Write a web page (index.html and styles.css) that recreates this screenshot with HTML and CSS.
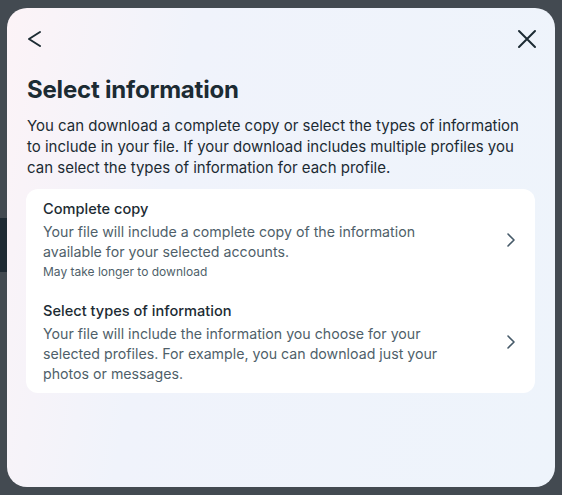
FILE: index.html
```html
<!DOCTYPE html>
<html lang="en">
<head>
    <meta charset="UTF-8">
    <meta name="viewport" content="width=device-width, initial-scale=1.0">
    <title>Select information</title>
    <link rel="stylesheet" href="styles.css">
</head>
<body>
    <div class="modal">
        <div class="top-bar">
            <button class="icon-btn" aria-label="Back">
                <svg width="24" height="24" viewBox="0 0 24 24"><path d="M18 5l-11 7 11 7" fill="none" stroke="#1c2b33" stroke-width="2" stroke-linecap="round" stroke-linejoin="round"/></svg>
            </button>
            <button class="icon-btn" aria-label="Close">
                <svg width="24" height="24" viewBox="0 0 24 24"><path d="M4 4l16 16M20 4L4 20" fill="none" stroke="#1c2b33" stroke-width="2" stroke-linecap="round"/></svg>
            </button>
        </div>
        <h1 class="title">Select information</h1>
        <p class="intro">You can download a complete copy or select the types of information to include in your file. If your download includes multiple profiles you can select the types of information for each profile.</p>
        <div class="card">
            <div class="option">
                <div class="option-text">
                    <div class="option-title">Complete copy</div>
                    <div class="option-desc">Your file will include a complete copy of the information available for your selected accounts.</div>
                    <div class="option-note">May take longer to download</div>
                </div>
                <svg class="chevron" width="16" height="16" viewBox="0 0 16 16"><path d="M8 2l6 6-6 6" fill="none" stroke="#465a69" stroke-width="1.6" stroke-linecap="round" stroke-linejoin="round"/></svg>
            </div>
            <div class="option">
                <div class="option-text">
                    <div class="option-title">Select types of information</div>
                    <div class="option-desc">Your file will include the information you choose for your selected profiles. For example, you can download just your photos or messages.</div>
                </div>
                <svg class="chevron" width="16" height="16" viewBox="0 0 16 16"><path d="M8 2l6 6-6 6" fill="none" stroke="#465a69" stroke-width="1.6" stroke-linecap="round" stroke-linejoin="round"/></svg>
            </div>
        </div>
    </div>
</body>
</html>
```

FILE: styles.css
```css
body {
    margin: 0;
    font-family: Inter, "Noto Sans", sans-serif;
    color: #1c2b33;
    background: #434a51 linear-gradient(#1f2a33, #1f2a33) no-repeat 0 218px / 7px 54px;
}
.modal {
    margin: 8px 7px;
    height: 479px;
    box-sizing: border-box;
    border-radius: 20px;
    padding: 0 20px;
    background: linear-gradient(100deg, #fcf3f7 0%, #f0f3fb 30%, #eef4fb 100%);
}
.top-bar { display: flex; justify-content: space-between; padding-top: 19px; margin: 0 -4px 0 -5px; }
.icon-btn { border: 0; background: none; padding: 0; width: 24px; height: 24px; display: flex; cursor: pointer; }
.title { margin: 24px 0 0 0; font-size: 24px; font-weight: 700; line-height: 30px; letter-spacing: -0.2px; }
.intro { margin: 10px 0 0 0; font-size: 15px; line-height: 21px; }
.card { margin: 11px 0 0 -1px; background: #fff; border-radius: 12px; }
.option { display: flex; align-items: center; padding: 8px 19px 9px 17px; }
.option-text { flex: 1; }
.option-title { font-size: 14.6px; font-weight: 500; line-height: 24px; }
.option-desc { margin-top: 1px; font-size: 14.2px; line-height: 20px; color: #4f5f6a; }
.option-note { font-size: 12px; line-height: 20px; color: #4f5f6a; }
.chevron { margin-left: 52px; flex-shrink: 0; }
```
